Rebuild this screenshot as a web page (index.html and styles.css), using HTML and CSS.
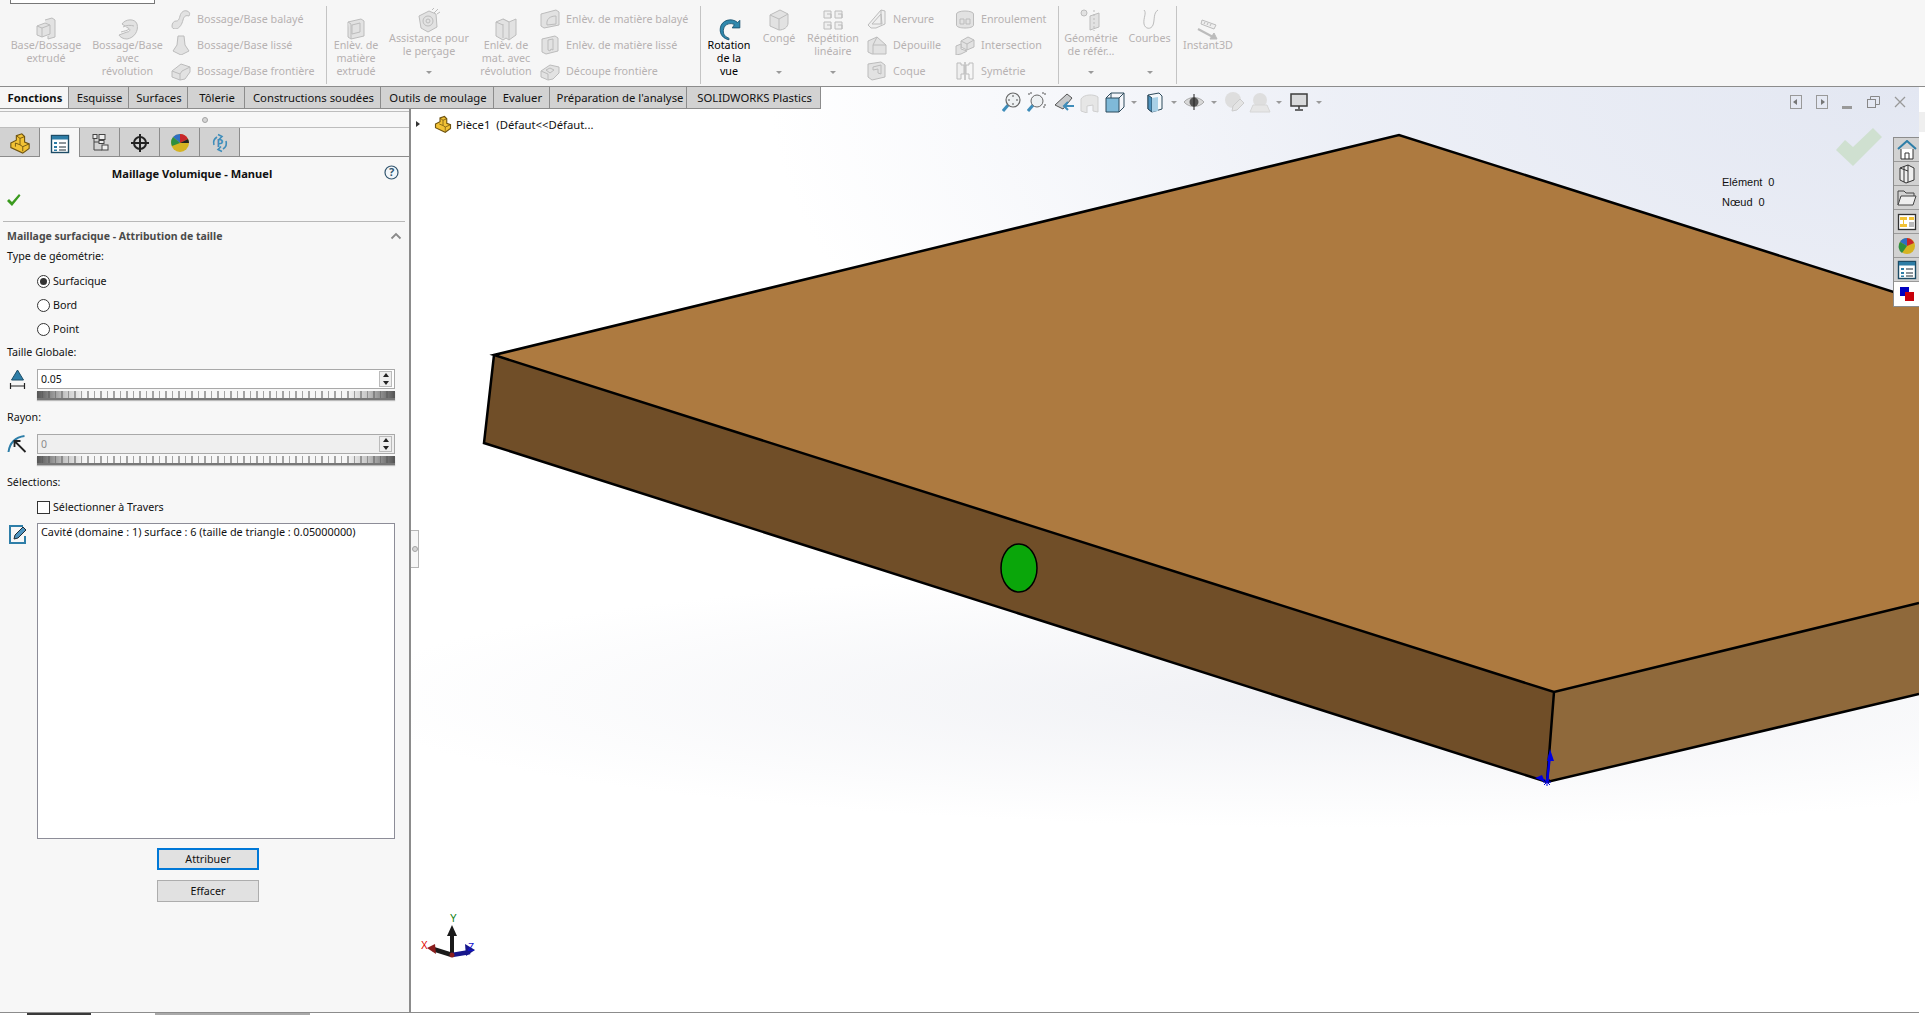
FILE: index.html
```html
<!DOCTYPE html>
<html lang="fr">
<head>
<meta charset="utf-8">
<title>Maillage Volumique - Manuel</title>
<link rel="stylesheet" href="styles.css">
</head>
<body>
<div class="app">
  <header class="ribbon">
    <div class="menubox"></div>
    <div class="rb w76"><div class="ri"><svg class="gi" width="24" height="24" viewBox="0 0 24 24"><path d="M11 3l7-2 3 2v17l-7 2v-3"/><path d="M3 9l8-3 5 2v9l-8 3-5-2z"/><path d="M3 9l5 2 8-3M8 11v9"/></svg></div><span>Base/Bossage<br>extrudé</span></div>
    <div class="rb w87"><div class="ri"><svg class="gi" width="24" height="24" viewBox="0 0 24 24"><path d="M6 7c3-5 13-6 15 0 2 7-3 14-10 15-4 0-7-2-8-4l8-3c3 0 4-3 1-4l-6-4z"/><path d="M7 10c3-2 8-2 11-1M5 15c3-1 6-1 8-3"/></svg></div><span>Bossage/Base<br>avec<br>révolution</span></div>
    <div class="rc w156">
      <div class="rs"><svg class="gi" width="20" height="20" viewBox="0 0 20 20"><path d="M1 17c0-3 2-5 4-5 2 0 3-1 4-5 1-4 4-6 7-5 3 1 3 3 2 5-3-1-5 0-6 4-1 4-3 8-7 9-3 0-4-1-4-3z"/></svg><span>Bossage/Base balayé</span></div>
      <div class="rs"><svg class="gi" width="20" height="20" viewBox="0 0 20 20"><path d="M7 1h6l1 9 4 6-8 4-8-4 4-6z"/></svg><span>Bossage/Base lissé</span></div>
      <div class="rs"><svg class="gi" width="20" height="20" viewBox="0 0 20 20"><path d="M1 10l9-7 9 3v5l-5 7-5 1-8-3z"/><path d="M1 10l8 3 2-3 8-4M9 13v6"/></svg><span>Bossage/Base frontière</span></div>
    </div>
    <i class="rsep"></i>
    <div class="rb w58"><div class="ri"><svg class="gi" width="24" height="24" viewBox="0 0 24 24"><path d="M4 5l13-3 3 2v15l-13 3-3-2z"/><path d="M8 8l8-2v9l-8 2z"/><path d="M4 5l3 2v15"/></svg></div><span>Enlèv. de<br>matière<br>extrudé</span></div>
    <div class="rb w88 up"><div class="ri"><svg class="gi" width="26" height="26" viewBox="0 0 26 26"><path d="M3 9l10-5 7 3 1 13-9 5-7-4z"/><circle cx="12" cy="14" r="5"/><circle cx="12" cy="14" r="2"/><path d="M18 6l4-4M21 7l3-2M16 3l2-2"/></svg></div><span>Assistance pour<br>le perçage</span><b class="drop"></b></div>
    <div class="rb w66"><div class="ri"><svg class="gi" width="26" height="26" viewBox="0 0 26 26"><path d="M3 6l7-3 6 3 7-3v16l-7 5-3-2-3 2-7-4z"/><path d="M10 3l6 3v18M10 8v14M3 6l7 3"/></svg></div><span>Enlèv. de<br>mat. avec<br>révolution</span></div>
    <div class="rc w160">
      <div class="rs"><svg class="gi" width="20" height="20" viewBox="0 0 20 20"><path d="M1 5l15-4 3 2v13L4 19l-3-2z"/><path d="M7 16c-1-6 3-9 9-9v8z"/></svg><span>Enlèv. de matière balayé</span></div>
      <div class="rs"><svg class="gi" width="20" height="20" viewBox="0 0 20 20"><path d="M2 4l13-3 3 2v13L6 19l-4-2z"/><path d="M8 5l5-1v11l-2-1-1 2-2-1z"/></svg><span>Enlèv. de matière lissé</span></div>
      <div class="rs"><svg class="gi" width="20" height="20" viewBox="0 0 20 20"><path d="M1 10l9-6 9 2v6l-6 6-5 1-7-3z"/><path d="M6 9l4-2 4 2-4 3z"/><path d="M1 10l7 3v6"/></svg><span>Découpe frontière</span></div>
    </div>
    <i class="rsep"></i>
    <div class="rb w56 on"><div class="ri"><svg width="26" height="26" viewBox="0 0 24 24"><path d="M20 6C14 1 5 4 4 11c-1 6 3 10 8 11 0-1 0-2-1-2-3-1-5-4-4-8 1-5 7-6 10-4l-2 3h7V4z" fill="#2f88ad" stroke="#16506d" stroke-width=".8"/></svg></div><span>Rotation<br>de la<br>vue</span></div>
    <div class="rb w44 up"><div class="ri"><svg class="gi" width="24" height="24" viewBox="0 0 24 24"><path d="M3 7l10-5 8 4v9c0 4-4 7-9 7l-9-4z"/><path d="M3 7l9 4 9-5M12 11v11"/></svg></div><span>Congé</span><b class="drop"></b></div>
    <div class="rb w64 up"><div class="ri"><svg class="gi thin" width="24" height="24" viewBox="0 0 24 24"><path d="M3 3h7v7H3zM14 3h7v7h-7zM3 14h7v7H3zM14 14h7v7h-7zM6 6h4v4M17 6h4v4M6 17h4v4M17 17h4v4"/></svg></div><span>Répétition<br>linéaire</span><b class="drop"></b></div>
    <div class="rc w88 ml2">
      <div class="rs"><svg class="gi thin" width="20" height="20" viewBox="0 0 20 20"><path d="M1 16L14 1l4 1v13l-9 4-5 0z"/><path d="M5 15l9-10 1 10zM14 1v14"/></svg><span>Nervure</span></div>
      <div class="rs"><svg class="gi" width="20" height="20" viewBox="0 0 20 20"><path d="M1 6l9-4 9 8v9H5l-4-2z"/><path d="M10 2l-4 8v9M6 10l13 0"/></svg><span>Dépouille</span></div>
      <div class="rs"><svg class="gi" width="20" height="20" viewBox="0 0 20 20"><path d="M1 3l13-2 4 3v12l-13 3-4-3z"/><path d="M6 6l8-2v9l-3-1v-4l-5 1z"/></svg><span>Coque</span></div>
    </div>
    <div class="rc w102">
      <div class="rs"><svg class="gi" width="20" height="20" viewBox="0 0 20 20"><ellipse cx="10" cy="5" rx="8.500" ry="3"/><path d="M1.500 5v11c0 2 4 3 8.500 3s8.500-1 8.500-3V5"/><path d="M5 10h4v5H5zM11 10h4v5h-4z"/></svg><span>Enroulement</span></div>
      <div class="rs"><svg class="gi" width="20" height="20" viewBox="0 0 20 20"><path d="M6 6l7-4 6 3v7l-7 3-6-3z"/><path d="M1 11l5-2v5l6 2-6 3-5 1z"/><path d="M6 6l6 3 7-4M12 9v6"/></svg><span>Intersection</span></div>
      <div class="rs"><svg class="gi thin" width="20" height="20" viewBox="0 0 20 20"><path d="M2 2h4v2h3v9H6v5H2z"/><path d="M10 1v18" stroke-width="1.500"/><path d="M18 2h-4v2h-3v9h3v5h4z" fill="none"/></svg><span>Symétrie</span></div>
    </div>
    <i class="rsep"></i>
    <div class="rb w64 up"><div class="ri"><svg class="gi" width="26" height="24" viewBox="0 0 26 24"><circle cx="6" cy="5" r="3"/><path d="M12 8l9-3v14l-9 3z"/><path d="M16 2v21" stroke-dasharray="2 2"/></svg></div><span>Géométrie<br>de référ...</span><b class="drop"></b></div>
    <div class="rb w52 up"><div class="ri"><svg class="gi nofill" width="24" height="24" viewBox="0 0 24 24"><path d="M6 2c3 3-1 8 0 14 1 5 7 6 9 1 2-5 0-12 5-15"/></svg></div><span>Courbes</span><b class="drop"></b></div>
    <i class="rsep"></i>
    <div class="rb w62"><div class="ri"><svg class="gi thin" width="24" height="24" viewBox="0 0 24 24"><path d="M6 3l14 5-2 4L5 7z"/><path d="M9 5l-1 2M12 6l-1 2M15 7l-1 2"/><path d="M2 12l15 8" stroke-width="2"/><path d="M14 22l7 0-3-6z" fill="#bbb"/></svg></div><span>Instant3D</span></div>
  </header>

  <main class="stage">
    <nav class="tabs">
      <span class="tab active">Fonctions</span>
      <span class="tab t60">Esquisse</span>
      <span class="tab t59">Surfaces</span>
      <span class="tab t57">Tôlerie</span>
      <span class="tab t136">Constructions soudées</span>
      <span class="tab t113">Outils de moulage</span>
      <span class="tab t56">Evaluer</span>
      <span class="tab t137">Préparation de l'analyse</span>
      <span class="tab t134">SOLIDWORKS Plastics</span>
    </nav>

    <aside class="panel">
      <div class="grip"><i></i></div>
      <div class="ptabs">
        <span class="ptab first"><svg width="22" height="22" viewBox="0 0 24 24"><path d="M2 12l6-3V4l6-2 3 3v6l5 2v5l-7 5-13-6z" fill="#f2c235" stroke="#6f5410" stroke-width="1.200"/><path d="M8 4l4 3 5-2M12 7v7l-5-2M7 12l0 4M12 14l3 2 7-3M15 16v5" fill="none" stroke="#6f5410"/></svg></span>
        <span class="ptab current"><svg width="20" height="20" viewBox="0 0 20 20"><rect x="1.500" y="1.500" width="17" height="17" fill="#fff" stroke="#1d4c66" stroke-width="1.400"/><rect x="2" y="2" width="16" height="3.500" fill="#2d7da6"/><path d="M4 8h3v2H4zM4 12h3v2H4zM4 15.500h3v1.500H4z" fill="#2d7da6"/><path d="M9 9h7M9 13h7M9 16h7" stroke="#1d2c36" stroke-width="1.200"/></svg></span>
        <span class="ptab"><svg width="20" height="20" viewBox="0 0 20 20" fill="#eee" stroke="#444"><rect x="3" y="1.500" width="4" height="4"/><rect x="9" y="1.500" width="6" height="5"/><rect x="12" y="12" width="6" height="5"/><path d="M4 5.500V17h8M4 9h6" fill="none"/><rect x="9" y="7.500" width="5" height="3"/></svg></span>
        <span class="ptab"><svg width="20" height="20" viewBox="0 0 20 20" fill="none" stroke="#222" stroke-width="2"><circle cx="10" cy="10" r="6"/><path d="M10 1v18M1 10h18"/></svg></span>
        <span class="ptab"><svg width="20" height="20" viewBox="0 0 20 20"><circle cx="10" cy="10" r="9" fill="#d5b321"/><path d="M10 10L3 4a9 9 0 0 1 7-3z" fill="#2f6fc4"/><path d="M10 10V1a9 9 0 0 1 8 5z" fill="#c8262b"/><path d="M10 10l-8 3a9 9 0 0 1 1-9z" fill="#2d8f3f"/><path d="M10 10l8-4a9 9 0 0 1 1 4z" fill="#222"/></svg></span>
        <span class="ptab"><svg width="20" height="20" viewBox="0 0 20 20" fill="none" stroke="#3f8dba" stroke-width="1.600"><path d="M4 12a7 7 0 0 1 3-8M16 8a7 7 0 0 1-3 8M8 1.500l4 2-3 3M12 18.500l-4-2 3-3"/><text x="10" y="14" text-anchor="middle" class="ptxt">P</text></svg></span>
      </div>
      <div class="ptitle"><strong>Maillage Volumique - Manuel</strong><svg class="help" width="15" height="15" viewBox="0 0 15 15"><circle cx="7.500" cy="7.500" r="6.500" fill="#f2f6fa" stroke="#33566f" stroke-width="1.200"/><text x="7.500" y="11" text-anchor="middle" class="qtxt">?</text></svg></div>
      <div class="okrow"><svg width="15" height="14" viewBox="0 0 15 14"><path d="M1 8l2-2 3 3 7-8 1.500 1.500L6 13z" fill="#3a9a1e"/></svg></div>
      <hr class="divider">
      <div class="section"><span>Maillage surfacique - Attribution de taille</span><svg width="12" height="8" viewBox="0 0 12 8"><path d="M1.500 6.500L6 2l4.500 4.500" fill="none" stroke="#8a8a8a" stroke-width="1.800"/></svg></div>
      <div class="lbl">Type de géométrie:</div>
      <div class="radios">
        <div class="opt"><i class="radio sel"></i>Surfacique</div>
        <div class="opt"><i class="radio"></i>Bord</div>
        <div class="opt"><i class="radio"></i>Point</div>
      </div>
      <div class="lbl gap1">Taille Globale:</div>
      <div class="spinrow">
        <svg class="side" width="18" height="20" viewBox="0 0 18 20"><path d="M9 1l6 10H3z" fill="#2e7ea8" stroke="#1c4e68"/><path d="M2 14v6M16 14v6M2 17h14" stroke="#222" stroke-width="1.200" fill="none"/></svg>
        <div class="field">
          <div class="input"><span>0.05</span><i class="spin"></i></div>
          <div class="slider"></div>
        </div>
      </div>
      <div class="lbl gap8">Rayon:</div>
      <div class="spinrow">
        <svg class="side" width="20" height="20" viewBox="0 0 20 20"><path d="M1 18C2 9 8 3 17 2" fill="none" stroke="#2e7ea8" stroke-width="2"/><path d="M18 18L8 8M7 13V7h6" fill="none" stroke="#222" stroke-width="1.800"/></svg>
        <div class="field">
          <div class="input off"><span>0</span><i class="spin"></i></div>
          <div class="slider"></div>
        </div>
      </div>
      <div class="lbl gap8">Sélections:</div>
      <div class="opt chk"><i class="box"></i>Sélectionner à Travers</div>
      <div class="selrow">
        <svg class="side" width="20" height="20" viewBox="0 0 20 20"><path d="M15 1H2v17h15v-7" fill="none" stroke="#2e7ea8" stroke-width="2"/><path d="M6 14l1-4 8-8 3 3-8 8z" fill="#4d93bf" stroke="#1d2c36"/></svg>
        <div class="listbox">Cavité (domaine : 1) surface : 6 (taille de triangle : 0.05000000)</div>
      </div>
      <button class="btn focus">Attribuer</button>
      <button class="btn">Effacer</button>
    </aside>

    <section class="view">
      <svg class="scene" viewBox="0 0 1508 926" preserveAspectRatio="none">
        <path d="M83 268L988 48 1508 213V516L1143 605z" fill="#ad7a40"/>
        <path d="M83 268L73 356 1136 695 1143 605z" fill="#704e28"/>
        <path d="M1143 605L1136 695 1508 607V516z" fill="#8f693b"/>
        <path d="M1508 213L988 48 83 268 1143 605 1508 516M83 268L73 356 1136 695 1508 607M1143 605L1136 695" fill="none" stroke="#000" stroke-width="2.500"/>
        <ellipse cx="608" cy="481" rx="18" ry="24" fill="#0aa60a" stroke="#000" stroke-width="1.500"/>
        <path d="M1136 695L1139 668" stroke="#0000e0" stroke-width="2.500"/>
        <path d="M1139 662l-3 12h7zM1124 691l10 4-3-7z" fill="#0000e0"/>
        <path d="M1132 695h8M1136 691v8M1133 692l6 6M1139 692l-6 6" stroke="#0000e0"/>
        <path d="M1425 63l17 16 29-29-9-9-20 19-8-7z" fill="#cfe0d0"/>
        <g>
          <path d="M41 868L22 862" stroke="#1a1a1a" stroke-width="4.500"/>
          <path d="M24 857l-8 4 9 6z" fill="#8a1d1d"/>
          <path d="M41 868V845" stroke="#1a1a1a" stroke-width="4"/>
          <path d="M41 838l-5 11h10z" fill="#1a1a1a"/>
          <path d="M41 868l18-3" stroke="#16168c" stroke-width="4.500"/>
          <path d="M54 857l10 6-9 6z" fill="#16168c"/>
          <circle cx="41" cy="868" r="2.500" fill="#8a1d1d"/>
          <text x="39" y="835" class="ty">Y</text>
          <text x="10" y="862" class="tx">X</text>
          <text x="57" y="864" class="tz">Z</text>
        </g>
      </svg>
      <div class="tree"><i class="caret"></i><svg width="18" height="18" viewBox="0 0 24 24"><path d="M2 12l6-3V4l6-2 3 3v6l5 2v5l-7 5-13-6z" fill="#f2c235" stroke="#6f5410" stroke-width="1.500"/><path d="M8 4l4 3 5-2M12 7v7l-5-2M12 14l3 2 7-3M15 16v5" fill="none" stroke="#6f5410"/></svg><span>Pièce1  (Défaut&lt;&lt;Défaut...</span></div>
      <div class="vbar">
        <span class="vi"><svg width="22" height="22" viewBox="2 0 22 22"><path d="M3 20l6-7" stroke="#3f8dba" stroke-width="3"/><circle cx="13" cy="9" r="7" fill="#eef1f3" stroke="#666" stroke-width="1.200"/><path d="M13 4v2M13 12v2M8 9h2M16 9h2" stroke="#555"/></svg></span>
        <span class="vi"><svg width="22" height="22" viewBox="2 0 22 22"><path d="M3 20l6-7" stroke="#3f8dba" stroke-width="3"/><circle cx="12" cy="10" r="6" fill="#eef1f3" stroke="#666"/><path d="M7 2H4v3M17 2h3v3M20 13v3h-2" fill="none" stroke="#555" stroke-dasharray="2 1"/></svg></span>
        <span class="vi"><svg width="22" height="22" viewBox="0 0 22 22"><path d="M2 14L14 3l5 4-9 11z" fill="#c7c9cb" stroke="#555"/><path d="M21 15h-9M15 11l-4 4 4 4" fill="none" stroke="#3f8dba" stroke-width="2"/></svg></span>
        <span class="vi"><svg width="22" height="22" viewBox="0 0 22 22"><path d="M3 8c3-5 13-5 17-2v15l-5-1v-6l-6 1v7l-6-2z" fill="#e6e6e6" stroke="#cfcfcf"/></svg></span>
        <span class="vi"><svg width="22" height="22" viewBox="0 0 22 22"><path d="M2 7h13v14H2z" fill="#7fb9d8" stroke="#2d4a5c"/><path d="M2 7l5-5h13v14l-5 5M15 7l5-5M7 2v5" fill="none" stroke="#2d4a5c"/></svg></span><i class="va"></i>
        <span class="vi"><svg width="22" height="22" viewBox="0 0 22 22"><path d="M4 4l11-2 3 3v13l-10 3-4-3z" fill="#f4f8fa" stroke="#2d4a5c"/><path d="M4 4l4 3v14l-4-3z" fill="#4d93bf" stroke="#2d4a5c"/><path d="M8 7l6-1v14l-6 1z" fill="#a8d0e6"/></svg></span><i class="va"></i>
        <span class="vi"><svg width="22" height="22" viewBox="0 0 22 22"><path d="M1 11c5-6 15-6 20 0-5 6-15 6-20 0z" fill="#d8d8d8" stroke="#aaa"/><circle cx="11" cy="11" r="4.500" fill="#555"/><path d="M11 3v16" stroke="#222"/></svg></span><i class="va"></i>
        <span class="vi"><svg width="22" height="22" viewBox="0 0 22 22"><circle cx="10" cy="9" r="8" fill="#dedede"/><path d="M9 20l1-5 7-7 4 4-7 7z" fill="#e4e4e4" stroke="#ccc"/></svg></span>
        <span class="vi"><svg width="22" height="22" viewBox="0 0 22 22"><circle cx="11" cy="9" r="7" fill="#dedede"/><path d="M1 21l3-7h14l3 7z" fill="#e6e6e6" stroke="#d6d6d6"/></svg></span><i class="va"></i>
        <span class="vi"><svg width="22" height="22" viewBox="0 0 22 22"><rect x="3" y="3" width="16" height="12" fill="#d9dadc" stroke="#3d3d3d" stroke-width="1.500"/><path d="M11 15v3M7 19h8" stroke="#3d3d3d" stroke-width="1.500"/></svg></span><i class="va"></i>
      </div>
      <div class="winbtns">
        <svg width="12" height="14" viewBox="0 0 12 14"><rect x=".5" y=".5" width="11" height="13" fill="none" stroke="#999"/><path d="M7 4v6L3 7z" fill="#777"/></svg>
        <svg width="12" height="14" viewBox="0 0 12 14"><rect x=".5" y=".5" width="11" height="13" fill="none" stroke="#999"/><path d="M5 4v6l4-3z" fill="#777"/></svg>
        <svg width="11" height="14" viewBox="0 0 11 14"><path d="M0 11h10v3H0z" fill="#999"/></svg>
        <svg width="13" height="12" viewBox="0 0 13 12" fill="none" stroke="#888"><rect x=".5" y="3.500" width="8" height="8"/><path d="M3.500 3V.5h9v8H9"/></svg>
        <svg width="12" height="12" viewBox="0 0 12 12"><path d="M1 1l10 10M11 1L1 11" stroke="#999" stroke-width="1.300"/></svg>
      </div>
      <div class="stats">
        <div class="stat"><span>Elément</span><span>0</span></div>
        <div class="stat"><span>Nœud</span><span>0</span></div>
      </div>
      <div class="taskbar">
        <span class="tk"><svg width="20" height="20" viewBox="0 0 20 20"><path d="M1 9l9-8 9 8" fill="none" stroke="#2e7ea8" stroke-width="2"/><path d="M4 9v10h12V9" fill="#fff" stroke="#333"/><path d="M8 19v-6h4v6" fill="none" stroke="#333"/></svg></span>
        <span class="tk"><svg width="20" height="20" viewBox="0 0 20 20" fill="#eee" stroke="#333"><path d="M3 4l8-3 6 3v12l-8 3-6-3z"/><path d="M7 2.500V18M11 1v17M3 4l8 3"/></svg></span>
        <span class="tk"><svg width="20" height="20" viewBox="0 0 20 20"><path d="M1 17V3h6l2 2h8v3" fill="none" stroke="#444"/><path d="M1 17l3-9h15l-3 9z" fill="#eee" stroke="#444"/></svg></span>
        <span class="tk"><svg width="20" height="20" viewBox="0 0 20 20"><rect x="1.500" y="2.500" width="17" height="15" fill="#fff" stroke="#333" stroke-width="1.300"/><path d="M3 5h7v3H7v4h3v3H3v-3h3V8H3z" fill="#f2c235"/><path d="M12 5h5v3h-5z" fill="#f2c235"/><path d="M12 10h5v5h-5z" fill="#bbb"/></svg></span>
        <span class="tk"><svg width="18" height="18" viewBox="0 0 18 18"><circle cx="9" cy="9" r="8" fill="#d5b321"/><path d="M9 9L2 5a8 8 0 0 1 7-4z" fill="#2f6fc4"/><path d="M9 9V1a8 8 0 0 1 7 5z" fill="#c8262b"/><path d="M9 9l-5 7a8 8 0 0 1-2-11z" fill="#2d8f3f"/></svg></span>
        <span class="tk"><svg width="20" height="20" viewBox="0 0 20 20"><rect x="1.500" y="1.500" width="17" height="17" fill="#fff" stroke="#1d4c66" stroke-width="1.400"/><rect x="2" y="2" width="16" height="3.500" fill="#2d7da6"/><path d="M4 8h3v2H4zM4 12h3v2H4zM4 15.500h3v1.500H4z" fill="#2d7da6"/><path d="M9 9h7M9 13h7M9 16h7" stroke="#1d2c36" stroke-width="1.200"/></svg></span>
        <span class="tk white"><svg width="16" height="16" viewBox="0 0 16 16"><rect x="1" y="1" width="9" height="9" fill="#0000c0"/><rect x="6" y="6" width="9" height="9" fill="#c8000a"/></svg></span>
      </div>
      <div class="handle"><i></i></div>
    </section>
    <div class="sliver"></div>
  </main>
  <footer class="foot"><i class="fa"></i><i class="fb"></i></footer>
</div>
</body>
</html>
```

FILE: styles.css
```css
* { box-sizing: border-box; }
html, body { margin: 0; height: 100%; overflow: hidden; background: #fff; }
body { font: 10.7px "Noto Sans", "Open Sans", sans-serif; color: #111; }
.app { width: 1925px; height: 1015px; display: flex; flex-direction: column; }

/* ribbon */
.ribbon { position: relative; height: 87px; background: #f6f6f6; border-bottom: 1px solid #8c8c8c; display: flex; padding-left: 8px; color: #b7b2b2; font-size: 10.75px; line-height: 13px; flex: none; }
.menubox { position: absolute; left: 10px; top: -3px; width: 145px; height: 7px; background: #fff; border: 1px solid #777; }
.rb { display: flex; flex-direction: column; align-items: center; text-align: center; height: 85px; padding-top: 18px; flex: none; }
.ri { height: 21px; display: flex; align-items: center; justify-content: center; overflow: visible; flex: none; }
.rb.up { padding-top: 8px; }
.rb.up .ri { height: 24px; }
.rb.on { color: #000; }
.drop { margin-top: auto; margin-bottom: 11px; width: 0; height: 0; border: 3px solid transparent; border-top: 3px solid #9a9a9a; border-bottom: 0; }
.rc { display: flex; flex-direction: column; padding-top: 6px; flex: none; }
.rs { height: 26px; display: flex; align-items: center; gap: 6px; white-space: nowrap; }
.rs svg { flex: none; }
.rsep { width: 1px; height: 78px; margin-top: 6px; background: #c4c4c4; flex: none; }
.ml2 { margin-left: 2px; }
.w44 { width: 44px; } .w52 { width: 53px; } .w56 { width: 56px; } .w58 { width: 58px; } .w62 { width: 62px; }
.w64 { width: 64px; } .w66 { width: 66px; } .w76 { width: 76px; } .w87 { width: 87px; } .w88 { width: 88px; }
.w102 { width: 103px; } .w156 { width: 155px; } .w160 { width: 161px; padding-left: 1px; }
.gi { fill: #e2e2e2; stroke: #bcbcbc; stroke-width: 1; }
.gi.thin { fill: #efefef; }
.gi.nofill { fill: none; }

/* stage */
.stage { flex: 1; display: grid; grid-template-columns: 411px 1508px 6px; grid-template-rows: 22px 1fr; min-height: 0; }
.tabs { grid-area: 1 / 1 / 2 / 4; z-index: 2; display: flex; align-self: start; justify-self: start; height: 22px; font-size: 11.3px; }
.tab { display: flex; align-items: center; justify-content: center; height: 22px; padding-left: 2px; background: #d2d2d2; border: 1px solid #8c8c8c; border-left: 0; border-top: 0; color: #111; flex: none; }
.tab.active { width: 69px; background: #f6f6f6; font-weight: 700; }
.t60 { width: 60px; } .t59 { width: 59px; } .t57 { width: 57px; } .t136 { width: 136px; } .t113 { width: 113px; }
.t56 { width: 56px; } .t137 { width: 137px; padding-left: 4px; } .t134 { width: 134px; }

.panel { grid-area: 2 / 1 / 3 / 2; background: #f7f7f7; border-right: 2px solid #8c8c8c; border-bottom: 1px solid #8c8c8c; display: flex; flex-direction: column; min-height: 0; }
.grip { margin-top: 2px; height: 17px; border-top: 1px solid #bdbdbd; border-bottom: 1px solid #bdbdbd; display: flex; align-items: center; justify-content: center; flex: none; }
.grip i, .handle i { width: 6px; height: 6px; border-radius: 50%; background: #d6d6d6; border: 1px solid #a3a3a3; }
.ptabs { height: 29px; display: flex; border-bottom: 1px solid #8c8c8c; flex: none; }
.ptab { width: 40px; height: 28px; padding-top: 2px; display: flex; align-items: center; justify-content: center; background: #d2d2d2; border-right: 1px solid #8c8c8c; }
.ptab.current { background: #f7f7f7; height: 29px; }
.ptxt { font: 700 11px "Noto Sans", sans-serif; fill: #3f8dba; stroke: none; }
.qtxt { font: 700 11px "Noto Sans", sans-serif; fill: #33566f; }
.ptitle { height: 33px; display: flex; align-items: center; justify-content: center; position: relative; font-size: 11.1px; flex: none; padding-right: 25px; }
.help { position: absolute; right: 10px; top: 8px; }
.okrow { height: 20px; padding-left: 6px; display: flex; align-items: center; flex: none; }
.divider { margin: 11px 4px 0 3px; width: 402px; border: 0; height: 1px; background: #b8b8b8; flex: none; }
.section { margin-top: 4px; height: 20px; padding: 0 7px; font-weight: 700; color: #4a4a4a; display: flex; align-items: center; justify-content: space-between; flex: none; font-size: 10.5px; }
.lbl { height: 20px; padding-left: 7px; display: flex; align-items: center; flex: none; }
.gap1 { margin-top: 1px; } .gap8 { margin-top: 8px; }
.radios { margin-top: 3px; flex: none; }
.opt { height: 24px; display: flex; align-items: center; padding-left: 37px; gap: 3px; }
.radio { width: 13px; height: 13px; border-radius: 50%; border: 1px solid #333; background: #fff; display: flex; align-items: center; justify-content: center; }
.radio.sel::after { content: ""; width: 7px; height: 7px; border-radius: 50%; background: #333; }
.chk { margin-top: 3px; flex: none; }
.box { width: 13px; height: 13px; border: 1px solid #333; background: #fff; }
.spinrow { margin-top: 7px; display: flex; height: 30px; flex: none; align-items: flex-start; }
.side { flex: none; padding: 0 9px 0 7px; box-sizing: content-box; width: 21px; }
.field { width: 358px; flex: none; }
.input { height: 20px; border: 1px solid #a9a9a9; background: #fff; display: flex; align-items: center; justify-content: space-between; padding: 0 2px 0 3px; font-size: 10.5px; }
.input.off { background: #efefef; color: #8b8b8b; }
.spin { width: 13px; height: 16px; background: #eee; border: 1px solid #bbb; position: relative; }
.spin::before, .spin::after { content: ""; position: absolute; left: 2.500px; border: 3px solid transparent; }
.spin::before { top: 1px; border-bottom: 4px solid #222; border-top: 0; }
.spin::after { bottom: 1px; border-top: 4px solid #222; border-bottom: 0; }
.slider { height: 9px; margin-top: 2px; background: linear-gradient(90deg, #555 0, rgba(110,110,110,.35) 28px, transparent 48px, transparent 310px, rgba(110,110,110,.35) 330px, #555 100%), repeating-linear-gradient(90deg, #f6f6f6 0 5px, #a3a3a3 5px 6.500px); border-bottom: 2px solid #777; box-shadow: 0 1px 1px #bbb; }
.selrow { margin-top: 4px; height: 316px; display: flex; flex: none; }
.selrow .side { padding-top: 2px; padding-right: 8px; width: 22px; height: 20px; }
.listbox { width: 358px; border: 1px solid #8d8d98; background: #fff; padding: 1px 3px; font-size: 10.85px; line-height: 14px; }
.btn { font: 10.7px "Noto Sans", sans-serif; display: block; margin: 10px 0 0 157px; width: 102px; height: 22px; padding: 0; background: #e1e1e1; border: 1px solid #adadad; color: #111; flex: none; }
.btn.focus { margin-top: 9px; border: 2px solid #0078d7; }

/* viewport */
.view { grid-area: 1 / 2 / 3 / 3; position: relative; overflow: hidden; border-bottom: 1px solid #8c8c8c; background: radial-gradient(ellipse 1150px 560px at 100% 0, #e3e7f2 0, rgba(227,231,242,.65) 50%, rgba(255,255,255,0) 100%), radial-gradient(ellipse 1000px 130px at 62% 66%, #eff0f4 0, rgba(239,240,244,0) 100%), #fff; }
.scene { display: block; width: 1508px; height: 926px; }
.ty { font: 10px "Liberation Sans", sans-serif; fill: #0a7d0a; }
.tx { font: 10px "Liberation Sans", sans-serif; fill: #e00000; }
.tz { font: 10px "Liberation Sans", sans-serif; fill: #1010d0; }
.tree { position: absolute; left: 5px; top: 27px; display: flex; align-items: center; font-size: 11.3px; white-space: pre; height: 20px; color: #111; }
.caret { width: 0; height: 0; border: 3.500px solid transparent; border-left: 4px solid #333; border-right: 0; margin-right: 14px; }
.tree svg { margin-right: 4px; }
.vbar { position: absolute; left: 589px; top: 4px; height: 22px; display: flex; align-items: center; }
.vi { width: 25.500px; height: 22px; display: flex; align-items: center; justify-content: center; flex: none; }
.va { width: 6px; height: 3px; border: 3px solid transparent; border-top: 3px solid #9a9a9a; border-bottom: 0; margin: 0 4.750px 0 3.500px; flex: none; }
.winbtns { position: absolute; left: 1379px; top: 8px; display: flex; align-items: center; gap: 14px; height: 14px; }
.stats { position: absolute; left: 1311px; top: 85px; font: 11px "Liberation Sans", sans-serif; color: #111; }
.stat { height: 20px; display: flex; gap: 6px; align-items: center; }
.taskbar { position: absolute; right: 0; top: 50px; width: 26px; display: flex; flex-direction: column; border: 1px solid #8c8c8c; border-right: 0; }
.tk { height: 24px; background: #d2d2d2; display: flex; align-items: center; justify-content: center; border-bottom: 1px solid #9a9a9a; }
.tk.white { background: #fff; border-bottom: 0; }
.handle { position: absolute; left: 0; top: 443px; width: 8px; height: 38px; background: #f7f7f7; border: 1px solid #b5b5b5; border-left: 0; display: flex; align-items: center; justify-content: center; }
.sliver { grid-area: 1 / 3 / 3 / 4; background: #fff; padding-top: 25px; }
.sliver::before { content: ""; display: block; height: 20px; background: #efefef; }
.foot { height: 2px; flex: none; position: relative; display: flex; background: #fff; }
.fa { width: 64px; margin-left: 27px; background: #3a3a3a; }
.fb { width: 155px; margin-left: 64px; background: #a9a9a9; }
```
